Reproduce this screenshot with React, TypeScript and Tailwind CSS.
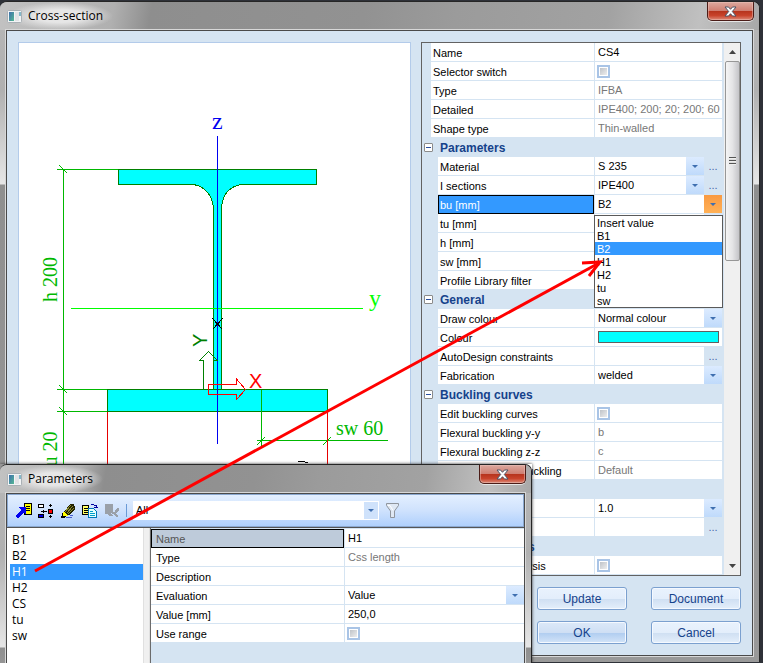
import { useId, useState, type ReactNode } from 'react'

type Control = 'text' | 'readonly' | 'check' | 'select' | 'selectMore' | 'more' | 'colour' | 'open'

interface PropertyRow {
  label: string
  control: Control
  value?: string
}

interface PropertyGroup {
  title?: string
  rows: PropertyRow[]
}

const GROUPS: PropertyGroup[] = [
  {
    rows: [
      { label: 'Name', control: 'text', value: 'CS4' },
      { label: 'Selector switch', control: 'check' },
      { label: 'Type', control: 'readonly', value: 'IFBA' },
      { label: 'Detailed', control: 'readonly', value: 'IPE400; 200; 20; 200; 60' },
      { label: 'Shape type', control: 'readonly', value: 'Thin-walled' },
    ],
  },
  {
    title: 'Parameters',
    rows: [
      { label: 'Material', control: 'selectMore', value: 'S 235' },
      { label: 'I sections', control: 'selectMore', value: 'IPE400' },
      { label: 'bu [mm]', control: 'open', value: 'B2' },
      { label: 'tu [mm]', control: 'select', value: 'tu' },
      { label: 'h [mm]', control: 'select', value: 'H1' },
      { label: 'sw [mm]', control: 'select', value: 'sw' },
      { label: 'Profile Library filter', control: 'select', value: 'All' },
    ],
  },
  {
    title: 'General',
    rows: [
      { label: 'Draw colour', control: 'select', value: 'Normal colour' },
      { label: 'Colour', control: 'colour' },
      { label: 'AutoDesign constraints', control: 'more' },
      { label: 'Fabrication', control: 'select', value: 'welded' },
    ],
  },
  {
    title: 'Buckling curves',
    rows: [
      { label: 'Edit buckling curves', control: 'check' },
      { label: 'Flexural buckling y-y', control: 'readonly', value: 'b' },
      { label: 'Flexural buckling z-z', control: 'readonly', value: 'c' },
      { label: 'Lateral torsional buckling', control: 'readonly', value: 'Default' },
    ],
  },
  {
    title: 'Property',
    rows: [
      { label: 'Scale', control: 'select', value: '1.0' },
      { label: 'Modifiers', control: 'more' },
    ],
  },
  {
    title: '2D FEM analysis',
    rows: [{ label: 'Use 2D FEM analysis', control: 'check' }],
  },
]

const PARAMETER_ROWS: PropertyRow[] = [
  { label: 'Name', control: 'text', value: 'H1' },
  { label: 'Type', control: 'readonly', value: 'Css length' },
  { label: 'Description', control: 'text', value: '' },
  { label: 'Evaluation', control: 'select', value: 'Value' },
  { label: 'Value [mm]', control: 'text', value: '250,0' },
  { label: 'Use range', control: 'check' },
]

const OPTIONS = ['Insert value', 'B1', 'B2', 'H1', 'H2', 'tu', 'sw']
const PARAMETERS = ['B1', 'B2', 'H1', 'H2', 'CS', 'tu', 'sw']

function Triangle() {
  return (
    <svg width="6" height="3" viewBox="0 0 6 3" aria-hidden="true">
      <path d="M0 0h6L3 3z" fill="#3f6fb0" />
    </svg>
  )
}

function DropArrow({ orange = false }: { orange?: boolean }) {
  return (
    <span
      className={`pointer-events-none flex w-[18px] shrink-0 items-center justify-center ${
        orange
          ? 'bg-linear-to-b from-[#f99a41] to-[#ffb157]'
          : 'bg-linear-to-b from-[#dcebff] to-[#bfdafb]'
      }`}
    >
      <Triangle />
    </span>
  )
}

function MoreButton({ label }: { label: string }) {
  return (
    <button
      type="button"
      aria-label={`${label}, more`}
      className="w-[18px] shrink-0 bg-[#d5e4f2] leading-[18px] text-[#4466a8]"
    >
      ...
    </button>
  )
}

function CheckBox({ id }: { id: string }) {
  return (
    <input
      id={id}
      type="checkbox"
      className="ml-[2px] size-[13px] appearance-none self-center border-2 border-[#a9c4e6] bg-linear-to-br from-[#b9bdc3] to-[#f4f4f4] shadow-[inset_0_0_0_1px_#fff] checked:bg-[#3399ff]"
    />
  )
}

function ValueCell({ id, row }: { id: string; row: PropertyRow }) {
  const { control, value, label } = row

  if (control === 'check') return <CheckBox id={id} />
  if (control === 'colour')
    return (
      <button
        id={id}
        type="button"
        className="mx-[3px] my-[3px] flex-1 border border-[#606060] bg-[#00ffff]"
      />
    )
  if (control === 'more')
    return (
      <>
        <input id={id} className="min-w-0 flex-1 pl-[3px]" />
        <MoreButton label={label} />
      </>
    )
  if (control === 'text' || control === 'readonly')
    return (
      <input
        id={id}
        defaultValue={value}
        readOnly={control === 'readonly'}
        className={`w-full min-w-0 pl-[3px] outline-none ${
          control === 'readonly' ? 'text-[#777777]' : 'text-black'
        }`}
      />
    )

  return (
    <>
      <select
        id={id}
        defaultValue={value}
        className="min-w-0 flex-1 appearance-none pl-[3px] outline-none"
      >
        <option>{value}</option>
      </select>
      <DropArrow orange={control === 'open'} />
      {control === 'selectMore' && <MoreButton label={label} />}
    </>
  )
}

function OptionList() {
  const [current, setCurrent] = useState('B2')
  return (
    <ul
      role="listbox"
      aria-label="bu [mm]"
      className="absolute top-[20px] -right-px -left-px z-10 border border-[#5a5a5a] bg-white"
    >
      {OPTIONS.map((option) => (
        <li
          key={option}
          role="option"
          aria-selected={option === current}
          onClick={() => setCurrent(option)}
          className={`h-[13px] pl-[2px] leading-[14px] ${
            option === current ? 'bg-[#3399ff] text-white' : 'text-black'
          }`}
        >
          {option}
        </li>
      ))}
    </ul>
  )
}

function GridRow({ row, indent }: { row: PropertyRow; indent: boolean }) {
  const id = useId()
  const open = row.control === 'open'
  return (
    <div className={`flex h-[19px] ${indent ? 'pl-[16px]' : 'pl-[9px]'}`}>
      <label
        htmlFor={id}
        className={`min-w-0 flex-1 truncate ${
          open
            ? 'border border-black bg-[#3399ff] pl-px leading-[18px] text-white'
            : 'border-b border-[#d5e4f2] bg-white pl-[2px] leading-[20px]'
        }`}
      >
        {row.label}
      </label>
      <div className="relative flex w-[128px] shrink-0 border-b border-l border-[#d5e4f2] bg-white">
        <ValueCell id={id} row={row} />
        {open && <OptionList />}
      </div>
    </div>
  )
}

function GroupHeader({ title }: { title: string }) {
  return (
    <div className="flex h-[19px] items-center pl-[2px]">
      <button
        type="button"
        aria-label={`Collapse ${title}`}
        className="flex size-[9px] items-center justify-center rounded-[1px] border border-[#8b8b8b] bg-white"
      >
        <span className="h-px w-[5px] bg-[#2a4fa0]" />
      </button>
      <h2 className="pl-[7px] text-[12px] leading-[20px] font-bold text-[#15428b]">{title}</h2>
    </div>
  )
}

function ScrollBar() {
  return (
    <div className="ml-[2px] flex w-[16px] flex-col items-center bg-[#f0f0f0]">
      <span className="flex h-[18px] items-center">
        <svg width="7" height="4" viewBox="0 0 7 4" aria-hidden="true">
          <path d="M3.5 0 7 4H0z" fill="#444" />
        </svg>
      </span>
      <span className="flex h-[200px] w-[15px] items-center justify-center rounded-[2px] border border-[#979797] bg-linear-to-r from-[#f5f5f5] via-[#e4e4e6] to-[#c4c4c8]">
        <span className="h-[8px] w-[7px] bg-[repeating-linear-gradient(#555_0_1px,#eee_1px_2px,#ddd_2px_3px)]" />
      </span>
      <span className="mt-auto flex h-[18px] items-center">
        <svg width="7" height="4" viewBox="0 0 7 4" aria-hidden="true">
          <path d="M0 0h7L3.500 4z" fill="#444" />
        </svg>
      </span>
    </div>
  )
}

function WindowIcon() {
  return (
    <svg width="15" height="13" viewBox="0 0 15 13" aria-hidden="true">
      <defs>
        <linearGradient id="pane" x1="0" y1="0" x2="1" y2="1">
          <stop offset="0" stopColor="#3f6fae" />
          <stop offset="1" stopColor="#55b893" />
        </linearGradient>
      </defs>
      <rect x="0.5" y="0.5" width="14" height="12" rx="1" fill="#f3f4f5" stroke="#a9b0b5" />
      <rect x="2" y="2" width="5" height="9" fill="url(#pane)" />
      <rect x="8" y="2" width="4" height="9" fill="#e2e3e6" />
      <rect x="12" y="2" width="2" height="4" fill="#84b8c9" />
    </svg>
  )
}

function TitleBar({ title }: { title: string }) {
  return (
    <header className="flex h-[28px] items-start bg-[linear-gradient(100deg,#c2c2c2_0%,#b0b0b0_15%,#8e8e8e_20%,#929292_48%,#9b9b9b_60%,#a2a2a2_80%,#c0c0c0_92%,#a8a8a8_100%)] pl-[7px]">
      <div className="flex h-[28px] items-center gap-[6px] rounded-full bg-[radial-gradient(closest-side,#e6e6e6_45%,transparent)] pr-[10px]">
        <WindowIcon />
        <h1 className="font-['Open_Sans',sans-serif] text-[12px] leading-[16px] text-black">
          {title}
        </h1>
      </div>
      <button
        type="button"
        aria-label={`Close ${title}`}
        className="mr-[5px] ml-auto flex h-[19px] w-[47px] items-center justify-center rounded-b-[5px] border border-t-0 border-[#4b1c17] bg-[linear-gradient(#dca99f_0%,#cf7f72_48%,#b5331c_50%,#c8432b_75%,#dd8a78_100%)] shadow-[inset_0_0_0_1px_#e9c3bb80,0_1px_0_#e6e6e6]"
      >
        <svg width="13" height="11" viewBox="0 0 13 11" aria-hidden="true">
          <path
            d="M1 1h3.500l2 2.300L8.500 1H12L8.300 5.500 12 10H8.500l-2-2.300L4.500 10H1l3.700-4.500z"
            fill="#fff"
            stroke="#4c5567"
          />
        </svg>
      </button>
    </header>
  )
}

function WindowFrame({ title, children }: { title: string; children: ReactNode }) {
  return (
    <section
      aria-label={title}
      className="flex h-full flex-col overflow-hidden rounded-t-[7px] border-t border-r border-[#262626] bg-[#a4a4a4]"
    >
      <TitleBar title={title} />
      <div className="flex flex-1 bg-[linear-gradient(#b5b5b5_0,#b0b0b0_60px,#e6e6e6_154px,#8f8f8f_155px,#999_100%)] px-[6px] pb-[6px]">
        <div className="flex min-w-0 flex-1 flex-col border border-[#4a4a4a] bg-[#d5e4f2] outline outline-[#d8d8d8]">
          {children}
        </div>
      </div>
    </section>
  )
}

function SectionDrawing() {
  return (
    <svg
      width="391"
      height="533"
      viewBox="19 43 391 533"
      fill="none"
      shapeRendering="crispEdges"
      role="img"
      aria-label="I section with bottom plate"
    >
      <g fill="#00ffff" stroke="#008000">
        <path d="M118.500 169.500h198v15h-75c-12 2-20 10-20 26v179h-8v-179c0-14-8-24-20-26h-75z" />
        <path d="M107.500 389.500h220v22h-220z" />
      </g>

      <g stroke="#00b800">
        <path d="M63.500 169v407M57 169.500h61M57 389.500h50M57 411.500h50" />
        <path d="M59 165l8 8M59 385l8 8M59 407l8 8" />
        <path d="M261.500 390v56M257 440.500h131M257 445l8-8M323 445l8-8" />
      </g>
      <rect x="107" y="412" width="1" height="164" fill="#e60000" />
      <rect x="327" y="412" width="1" height="164" fill="#e60000" />
      <rect x="71" y="308" width="292" height="1" fill="#00ff00" />
      <rect x="217" y="136" width="1" height="308" fill="#0000f0" />
      <path d="M212.500 318.500l10 11M222.500 318.500l-10 11" stroke="#000" />
      <path d="M203.500 389v-28.500h-4l9-9 9 9h-4" stroke="#008000" />
      <path d="M208.500 384.500h28v-5.500l9 10.500-9 10v-5h-28z" stroke="#ff0000" />

      <g className="font-['Liberation_Serif',serif]" fontSize="20" fill="#00b800">
        <text transform="translate(57 302) rotate(-90)">h 200</text>
        <text transform="translate(57 472) rotate(-90)">tu 20</text>
        <text x="336" y="435">
          sw 60
        </text>
        <text x="369" y="306" fontSize="24" fill="#00ff00">
          y
        </text>
        <text x="212" y="129" fontSize="24" fill="#0000f0">
          z
        </text>
      </g>
      <g className="font-['Liberation_Sans',sans-serif]" fontSize="20">
        <text transform="translate(207 347) rotate(-90)" fill="#008000">
          Y
        </text>
        <text x="249" y="388" fill="#ff0000">
          X
        </text>
      </g>
      <path d="M298 461h4l3 1 3 1" stroke="#000" />
    </svg>
  )
}

function DialogButton({ label, primary = false }: { label: string; primary?: boolean }) {
  return (
    <button
      type="button"
      className={`h-[23px] w-[90px] rounded-[3px] border border-[#7ba0cf] text-[12px] leading-[20px] text-[#15428b] shadow-[inset_0_0_0_1px_#f5f9ff] ${
        primary
          ? 'bg-[linear-gradient(#dce9f9_0%,#cfdff4_50%,#b0cdf0_52%,#d3e4f8_100%)]'
          : 'bg-[linear-gradient(#e9f2fd_0%,#e3eefb_50%,#cfdff2_52%,#e4effb_100%)]'
      }`}
    >
      {label}
    </button>
  )
}

function ToolButton({ label, children }: { label: string; children: ReactNode }) {
  return (
    <button type="button" aria-label={label} className="flex size-[16px] items-center justify-center">
      <svg width="16" height="16" viewBox="0 0 16 16" shapeRendering="crispEdges" aria-hidden="true">
        {children}
      </svg>
    </button>
  )
}

function ToolBar() {
  return (
    <div
      role="toolbar"
      aria-label="Parameters"
      className="flex h-[33px] items-center border border-[#8ba8cf] bg-linear-to-b from-[#e3efff] via-[#cfe2fd] to-[#afd0fc] pl-[8px]"
    >
      <div className="flex gap-[6px]">
        <ToolButton label="New">
          <path d="M8 0h8v12H8z" fill="#000" />
          <path d="M9 1h6v10H9z" fill="#ffff00" />
          <path d="M10 3.500h4M10 5.500h4M10 7.500h4" stroke="#000" />
          <path d="M3 4h7v7H9L7.500 9.500 2.500 15H1l-1-1v-2l5-5-2-2z" fill="#0000f0" />
        </ToolButton>
        <ToolButton label="Insert">
          <path d="M.5 1.500h5v3h-5z" fill="#fff" stroke="#000" />
          <path d="M.5 11.500h5v3h-5z" fill="#0000e0" stroke="#000" />
          <path d="M10.500 6.500h4v4h-4z" fill="#ff0000" stroke="#000" />
          <path d="M3 8.500h6M5.500 7v3M12.500 1v3M11 2.500h3M12.500 12v3M11 13.500h3" stroke="#000" />
        </ToolButton>
        <ToolButton label="Edit">
          <path d="M10 1h4v2h1v3l-6 6H4V9z" fill="#222200" />
          <path d="M5 9l6-7M7 10l6-7M8 11l6-6" stroke="#8c8c2c" />
          <path d="M3 9h1l4 3-1 1H2z" fill="#ffff00" />
          <path d="M2 10v2L1 14v1h3l3-2z" fill="#000" />
          <path d="M3 11h3v2H3z" fill="#ffff00" />
          <path d="M6 14.500h6M10 12.500h3" stroke="#4a5fd0" />
        </ToolButton>
        <ToolButton label="Copy">
          <path d="M.5 2.500h6v9h-6z" fill="#ffff66" stroke="#000" />
          <path d="M2 5.500h4M2 7.500h4M2 9.500h4" stroke="#000" />
          <path d="M6.500 5.500h5l3 3v6h-8z" fill="#e8ffff" stroke="#0078b8" />
          <path d="M8 8.500h3M8 10.500h5M8 12.500h5" stroke="#00a0c8" />
          <path d="M9 1.500h3M12 2.500h2M14.500 2v3M12 4.500h4" stroke="#0000a0" />
        </ToolButton>
        <ToolButton label="Delete">
          <path d="M1 1h8v7L7 10l2 3H5l-1-2H1z" fill="#9aa0a8" />
          <path d="M13 5h2v2l-3 3 2 3v1h-2l-3-3-2-1 2-1 1 1z" fill="#9aa0a8" />
        </ToolButton>
      </div>
      <span className="mx-[6px] h-[13px] w-px bg-[#6a9ad6]" />
      <div className="flex h-[19px] w-[246px] bg-white">
        <select aria-label="Filter" className="min-w-0 flex-1 appearance-none pl-[3px] outline-none">
          <option>All</option>
        </select>
        <span className="pointer-events-none my-px mr-px flex w-[14px] items-center justify-center bg-[#cfe2fb]">
          <Triangle />
        </span>
      </div>
      <button type="button" aria-label="Filter settings" className="ml-[7px]">
        <svg width="13" height="15" viewBox="0 0 13 15" aria-hidden="true">
          <path d="M.5.500h12v2L8.500 8v6.500h-4V8l-4-5.500z" fill="#dfe8f4" stroke="#8f959d" />
          <path d="M2 2.500h2l3 5" fill="none" stroke="#fff" />
        </svg>
      </button>
    </div>
  )
}

function ParameterRow({ row, selected }: { row: PropertyRow; selected: boolean }) {
  const id = useId()
  return (
    <div className="flex h-[19px]">
      <label
        htmlFor={id}
        className={`w-[193px] shrink-0 ${
          selected
            ? 'border border-black bg-[#becbda] pl-[4px] leading-[18px] text-[#555555]'
            : 'border-b border-[#d5e4f2] bg-white pl-[5px] leading-[20px]'
        }`}
      >
        {row.label}
      </label>
      <div className="flex min-w-0 flex-1 border-b border-l border-[#d5e4f2] bg-white">
        <ValueCell id={id} row={row} />
      </div>
    </div>
  )
}

function ParametersWindow() {
  const [current, setCurrent] = useState('H1')
  return (
    <WindowFrame title="Parameters">
      <ToolBar />
      <div className="flex flex-1 border-t border-[#555]">
        <ul
          role="listbox"
          aria-label="Parameters"
          className="w-[136px] bg-white pt-[4px] pl-[3px] font-['Open_Sans',sans-serif] text-[12px]"
        >
          {PARAMETERS.map((name) => (
            <li
              key={name}
              role="option"
              aria-selected={name === current}
              onClick={() => setCurrent(name)}
              className={`h-[16px] pl-[2px] leading-[16px] ${
                name === current ? 'bg-[#3399ff] text-white' : 'text-black'
              }`}
            >
              {name}
            </li>
          ))}
        </ul>
        <div className="w-[7px] border-x border-[#e0e0e0] bg-[#f0f0f0]" />
        <div className="min-w-0 flex-1 border-l border-[#6b6b6b] pt-px">
          {PARAMETER_ROWS.map((row, index) => (
            <ParameterRow key={row.label} row={row} selected={index === 0} />
          ))}
        </div>
      </div>
    </WindowFrame>
  )
}

export default function App() {
  return (
    <main className="relative flex min-h-screen flex-col overflow-hidden bg-[#2e3138] pt-px pr-[3px] font-['Liberation_Sans',sans-serif] text-[11px] text-black">
      <WindowFrame title="Cross-section">
        <div className="flex flex-1 gap-[10px] p-[11px]">
          <div className="min-w-0 flex-1 overflow-hidden border border-[#b3cbea] bg-white">
            <SectionDrawing />
          </div>
          <div className="w-[320px] shrink-0">
            <div className="flex border border-[#626262]">
              <div className="min-w-0 flex-1">
                {GROUPS.map((group, index) => (
                  <div key={index}>
                    {group.title && <GroupHeader title={group.title} />}
                    {group.rows.map((row) => (
                      <GridRow key={row.label} row={row} indent={Boolean(group.title)} />
                    ))}
                  </div>
                ))}
              </div>
              <ScrollBar />
            </div>
            <div className="mt-[11px] grid grid-cols-[90px_90px] justify-end gap-x-[24px] gap-y-[11px]">
              <DialogButton label="Update" />
              <DialogButton label="Document" />
              <DialogButton label="OK" primary />
              <DialogButton label="Cancel" />
            </div>
          </div>
        </div>
      </WindowFrame>

      <div className="absolute top-[464px] right-[231px] -bottom-[8px] left-0 z-20 shadow-[0_0_3px_#333]">
        <ParametersWindow />
      </div>

      <svg
        width="763"
        height="663"
        viewBox="0 0 763 663"
        fill="none"
        stroke="#ff0000"
        strokeWidth="3"
        className="pointer-events-none absolute top-0 left-0 z-30"
        aria-hidden="true"
      >
        <path d="M35 571 599 263" />
        <path d="M582 263l18-1-11 14" />
      </svg>
    </main>
  )
}
